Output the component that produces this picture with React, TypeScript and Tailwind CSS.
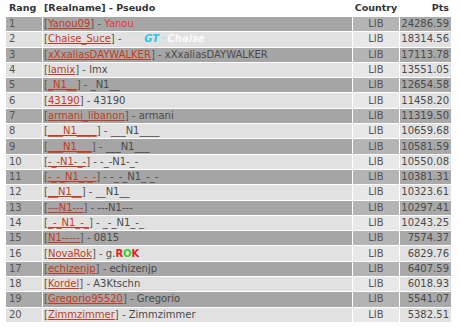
import React from 'react';

type Row = {
  rank: number;
  realname: string;
  pseudo: React.ReactNode;
  pts: string;
};

const rows: Row[] = [
  { rank: 1, realname: 'Yanou09', pseudo: <span className="text-[#e23a3a]">Yanou</span>, pts: '24286.59' },
  {
    rank: 2,
    realname: 'Chaise_Suce',
    pseudo: (
      <span className="italic font-bold">
        <span className="text-[#8fe3f2] font-normal not-italic">&nbsp;`&nbsp;`&nbsp;</span>
        <span className="text-[#27c8ea]">GT</span>
        <span className="text-[#a8e6f0]">~</span>
        <span className="text-[#fafafa]">Chaise</span>
      </span>
    ),
    pts: '18314.56',
  },
  { rank: 3, realname: 'xXxaliasDAYWALKER', pseudo: 'xXxaliasDAYWALKER', pts: '17113.78' },
  { rank: 4, realname: 'lamix', pseudo: 'lmx', pts: '13551.05' },
  { rank: 5, realname: '_N1__', pseudo: '_N1__', pts: '12654.58' },
  { rank: 6, realname: '43190', pseudo: '43190', pts: '11458.20' },
  { rank: 7, realname: 'armani_libanon', pseudo: 'armani', pts: '11319.50' },
  { rank: 8, realname: '___N1____', pseudo: '___N1____', pts: '10659.68' },
  { rank: 9, realname: '___N1___', pseudo: '___N1___', pts: '10581.59' },
  { rank: 10, realname: '-_-N1-_-', pseudo: '-_-N1-_-', pts: '10550.08' },
  { rank: 11, realname: '-_-_N1_-_-', pseudo: '-_-_N1_-_-', pts: '10381.31' },
  { rank: 12, realname: '__N1__', pseudo: '__N1__', pts: '10323.61' },
  { rank: 13, realname: '---N1---', pseudo: '---N1---', pts: '10297.41' },
  { rank: 14, realname: '_-_N1_-_', pseudo: '_-_N1_-_', pts: '10243.25' },
  { rank: 15, realname: 'N1-----', pseudo: '0815', pts: '7574.37' },
  {
    rank: 16,
    realname: 'NovaRok',
    pseudo: (
      <span>
        g.
        <span className="font-bold text-[#e81c1c]">R</span>
        <span className="font-bold text-[#2ed42e]">O</span>
        <span className="font-bold text-[#e81c1c]">K</span>
      </span>
    ),
    pts: '6829.76',
  },
  { rank: 17, realname: 'echizenjp', pseudo: 'echizenjp', pts: '6407.59' },
  { rank: 18, realname: 'Kordel', pseudo: 'A3Ktschn', pts: '6018.93' },
  { rank: 19, realname: 'Gregorio95520', pseudo: 'Gregorio', pts: '5541.07' },
  { rank: 20, realname: 'Zimmzimmer', pseudo: 'Zimmzimmer', pts: '5382.51' },
];

export default function App() {
  return (
    <div className="w-[460px] h-[328px] bg-white overflow-hidden font-['DejaVu_Sans',Verdana,sans-serif] text-[10px] text-[#4a4a4a]">
      <table className="ml-[5px] border-separate border-spacing-[1px] table-fixed w-[447px]">
        <colgroup>
          <col className="w-[36px]" />
          <col className="w-[309px]" />
          <col className="w-[46px]" />
          <col className="w-[51px]" />
        </colgroup>
        <thead>
          <tr className="h-[15px] text-[9.5px] font-bold text-[#333]">
            <th className="text-left pl-[3px] font-bold">Rang</th>
            <th className="text-left pl-px font-bold">[Realname] - Pseudo</th>
            <th className="text-center font-bold">Country</th>
            <th className="text-right pr-[2px] font-bold">Pts</th>
          </tr>
        </thead>
        <tbody>
          {rows.map((r) => {
            const odd = r.rank % 2 === 1;
            return (
              <tr key={r.rank} className="h-[14.3px] leading-[14px]">
                <td className={`pl-[3px] p-0 text-[#555] ${odd ? 'bg-[#a9a9a9]' : 'bg-[#e1e1e1]'}`}>{r.rank}</td>
                <td className={`pl-px p-0 whitespace-nowrap ${odd ? 'bg-[#a5a5a5]' : 'bg-[#e1e1e1]'}`}>
                  <span className="text-[#555]">[</span>
                  <a className="text-[#c23b22] underline">{r.realname}</a>
                  <span className="text-[#555]">] - </span>
                  {r.pseudo}
                </td>
                <td className={`text-center p-0 text-[#555] ${odd ? 'bg-[#b4b4b4]' : 'bg-[#e8e8e8]'}`}>LIB</td>
                <td className={`text-right pr-[2px] p-0 ${odd ? 'bg-[#a9a9a9]' : 'bg-[#e1e1e1]'}`}>{r.pts}</td>
              </tr>
            );
          })}
        </tbody>
      </table>
    </div>
  );
}
